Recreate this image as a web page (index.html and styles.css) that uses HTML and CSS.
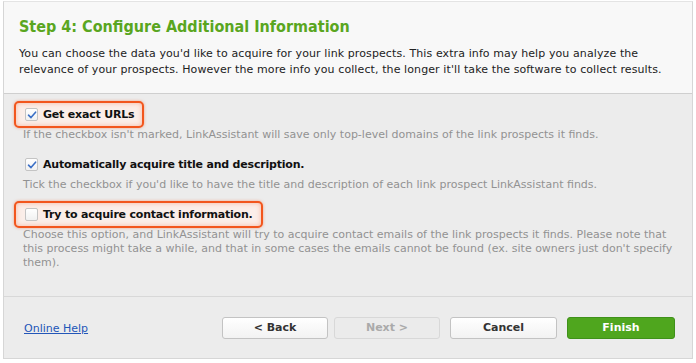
FILE: index.html
```html
<!DOCTYPE html>
<html lang="en">
	<head>
		<meta charset="UTF-8" />
		<title>Configure Additional Information</title>
		<link rel="stylesheet" href="styles.css">
	</head>
	<body>
		<div class="window">
			<div class="header">
				<h1>Step 4: Configure Additional Information</h1>
				<p>You can choose the data you'd like to acquire for your link prospects. This extra info may help you analyze the relevance of your prospects. However the more info you collect, the longer it'll take the software to collect results.</p>
			</div>
			<div class="content">
				<div class="option highlight">
					<span class="check checked">
						<svg viewBox="0 0 10 10" width="10" height="10"><path d="M1.5 5.2 L4 7.6 L8.6 2.2" /></svg>
					</span>
					<span class="label">Get exact URLs</span>
				</div>
				<p class="hint">If the checkbox isn't marked, LinkAssistant will save only top-level domains of the link prospects it finds.</p>

				<div class="option">
					<span class="check checked">
						<svg viewBox="0 0 10 10" width="10" height="10"><path d="M1.5 5.2 L4 7.6 L8.6 2.2" /></svg>
					</span>
					<span class="label">Automatically acquire title and description.</span>
				</div>
				<p class="hint">Tick the checkbox if you'd like to have the title and description of each link prospect LinkAssistant finds.</p>

				<div class="option highlight">
					<span class="check"></span>
					<span class="label">Try to acquire contact information.</span>
				</div>
				<p class="hint">Choose this option, and LinkAssistant will try to acquire contact emails of the link prospects it finds. Please note that this process might take a while, and that in some cases the emails cannot be found (ex. site owners just don't specify them).</p>
			</div>
			<div class="footer">
				<a href="#" class="help">Online Help</a>
				<div class="buttons">
					<button class="btn">&lt; Back</button>
					<button class="btn" disabled>Next &gt;</button>
					<button class="btn cancel">Cancel</button>
					<button class="btn finish">Finish</button>
				</div>
			</div>
		</div>
	</body>
</html>
```

FILE: styles.css
```css
* {
	margin: 0;
	padding: 0;
	box-sizing: border-box;
	font-family: "DejaVu Sans", "Liberation Sans", sans-serif;
}

body {
	background-color: #ffffff;
}

.window {
	margin: 1px 0 0 3px;
	width: 690px;
	height: 358px;
	border: 1px solid #d6d6d6;
	border-top-color: #e4e4e4;
	display: flex;
	flex-direction: column;
	background-color: #ececec;
}

.header {
	background-color: #f8f8f8;
	border-bottom: 1px solid #cfcfcf;
	padding: 15px 16px 15px 15px;
}

h1 {
	font-family: "DejaVu Sans Condensed", "DejaVu Sans", sans-serif;
	font-size: 16px;
	font-weight: bold;
	line-height: 20px;
	color: #5aa61f;
	margin-bottom: 9px;
}

.header p {
	font-size: 11px;
	line-height: 16px;
	letter-spacing: 0.1px;
	color: #222;
}

.content {
	flex: 1;
	padding: 7px 16px 0 10px;
	border-bottom: 1px solid #d8d8d8;
}

.option {
	display: inline-flex;
	align-items: center;
	height: 27px;
	padding: 0 8px 0 9px;
	border: 2px solid transparent;
	border-radius: 5px;
}

.option.highlight {
	border-color: #f2561d;
	background-color: #fbeee9;
	box-shadow: 0 0 3px rgba(242, 86, 29, 0.5), inset 0 0 5px rgba(242, 86, 29, 0.35);
}

.check {
	width: 13px;
	height: 13px;
	border: 1px solid #c4c4c4;
	border-radius: 2px;
	background: linear-gradient(#ffffff, #f1f1f1);
	margin-right: 5px;
	display: flex;
	align-items: center;
	justify-content: center;
}

.check svg path {
	fill: none;
	stroke: #3b6fc6;
	stroke-width: 1.6;
	stroke-linecap: round;
	stroke-linejoin: round;
}

.label {
	font-size: 11px;
	font-weight: bold;
	letter-spacing: -0.2px;
	color: #111;
}

.hint {
	font-size: 11px;
	line-height: 14px;
	color: #929292;
	padding-left: 9px;
	margin-bottom: 9px;
}

.footer {
	height: 61px;
	display: flex;
	align-items: center;
	justify-content: space-between;
	padding: 0 17px 0 20px;
}

.help {
	font-size: 11px;
	color: #2356b8;
	text-decoration: underline;
	margin-top: 1px;
}

.buttons {
	display: flex;
	gap: 6px;
}

.btn {
	width: 106px;
	height: 22px;
	border: 1px solid #c3c3c3;
	border-radius: 3px;
	background: linear-gradient(#ffffff, #f2f2f2);
	font-size: 11px;
	font-weight: bold;
	color: #333;
}

.btn:disabled {
	background: #ebebeb;
	border-color: #d8d8d8;
	color: #aaaaaa;
}

.btn.cancel {
	margin-left: 4px;
	width: 107px;
}

.btn.finish {
	margin-left: 4px;
	width: 108px;
	background: #4fa61e;
	border-color: #3f911a;
	color: #ffffff;
}
```
